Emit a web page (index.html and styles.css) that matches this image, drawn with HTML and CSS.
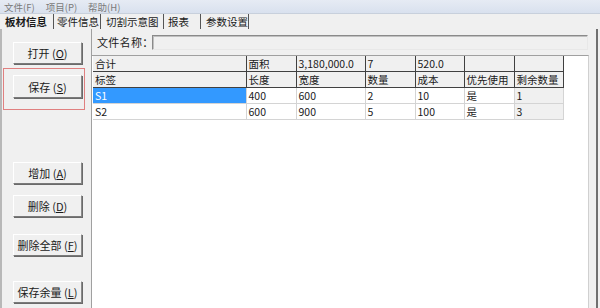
FILE: index.html
```html
<!DOCTYPE html>
<html lang="zh">
<head>
<meta charset="utf-8">
<link rel="stylesheet" href="styles.css">
</head>
<body>
<div class="app">
  <div class="menubar">
    <span>文件(F)</span><span>项目(P)</span><span>帮助(H)</span>
  </div>
  <div class="tabs">
    <span class="tab t1">板材信息</span>
    <span class="tab t2">零件信息</span>
    <span class="tab t3">切割示意图</span>
    <span class="tab t4">报表</span>
    <span class="tab t5">参数设置</span>
  </div>
  <div class="main">
    <div class="left">
      <button class="btn b-open">打开 (<u>O</u>)</button>
      <div class="redbox"><button class="btn">保存 (<u>S</u>)</button></div>
      <button class="btn b-add">增加 (<u>A</u>)</button>
      <button class="btn b-del">删除 (<u>D</u>)</button>
      <button class="btn b-delall">删除全部 (<u>F</u>)</button>
      <button class="btn b-saverest">保存余量 (<u>L</u>)</button>
    </div>
    <div class="right">
      <div class="filerow">
        <span class="flabel">文件名称：</span>
        <div class="finput"></div>
      </div>
      <div class="gridwrap">
        <table class="grid">
          <colgroup>
            <col class="c1"><col class="c2"><col class="c3"><col class="c4"><col class="c5"><col class="c6"><col class="c7">
          </colgroup>
          <tr class="hd">
            <td>合计</td><td>面积</td><td>3,180,000.0</td><td>7</td><td>520.0</td><td></td><td></td>
          </tr>
          <tr class="hd hd2">
            <td>标签</td><td>长度</td><td>宽度</td><td>数量</td><td>成本</td><td>优先使用</td><td>剩余数量</td>
          </tr>
          <tr class="dr">
            <td class="sel">S1</td><td>400</td><td>600</td><td>2</td><td>10</td><td>是</td><td class="ro">1</td>
          </tr>
          <tr class="dr">
            <td>S2</td><td>600</td><td>900</td><td>5</td><td>100</td><td>是</td><td class="ro">3</td>
          </tr>
        </table>
      </div>
    </div>
  </div>
</div>
</body>
</html>
```

FILE: styles.css
```css
html, body {
  margin: 0;
  padding: 0;
}
body {
  width: 600px;
  height: 308px;
  overflow: hidden;
  background: #f0f0f0;
  font-family: "Noto Sans CJK SC", "DejaVu Sans", sans-serif;
  font-size: 11px;
  color: #1a1a1a;
}
.app {
  display: flex;
  flex-direction: column;
  height: 308px;
}
.menubar {
  height: 13px;
  background: linear-gradient(#e6ebf4, #d9e1ee);
  border-bottom: 1px solid #c8d0dc;
  display: flex;
  align-items: flex-start;
  gap: 11px;
  padding-left: 4px;
  font-size: 9.5px;
  line-height: 14px;
  color: #7a7a7a;
  white-space: nowrap;
  flex: none;
}
.menubar span { height: 13px; }
.tabs {
  height: 15px;
  display: flex;
  align-items: center;
  padding-left: 3px;
  font-size: 10.5px;
  flex: none;
}
.tab {
  box-sizing: border-box;
  border-right: 1px solid #555;
  line-height: 15px;
  white-space: nowrap;
  overflow: hidden;
}
.t1 { width: 51px; padding-left: 2px; font-weight: 600; }
.t2 { width: 47px; padding-left: 3px; }
.t3 { width: 63px; padding-left: 5px; }
.t4 { width: 37px; padding-left: 4px; }
.t5 { width: 48px; padding-left: 5px; }
.main {
  flex: 1;
  display: flex;
}
.left {
  width: 91px;
  border-left: 2px solid #b8b8b8;
  box-sizing: border-box;
  display: flex;
  flex-direction: column;
  align-items: flex-start;
  padding-top: 13px;
}
.btn {
  box-sizing: border-box;
  width: 69px;
  height: 22px;
  margin-left: 11px;
  background: #f0f0f0;
  border: 1px solid;
  border-color: #ffffff #8a8a8a #7a7a7a #ffffff;
  box-shadow: 1px 1px 0 #6a6a6a;
  font-family: "Noto Sans CJK SC", sans-serif;
  font-size: 11px;
  color: #1a1a1a;
  padding: 0;
  display: flex;
  align-items: center;
  justify-content: center;
  white-space: pre;
  flex: none;
}
.btn u { text-underline-offset: 1px; }
.redbox {
  margin-top: 4px;
  margin-left: 1px;
  width: 82px;
  height: 42px;
  box-sizing: border-box;
  border: 1px solid #e08080;
  padding-top: 6px;
  flex: none;
}
.redbox .btn { margin-left: 9px; height: 23px; }
.b-add { margin-top: 52px; }
.b-del { margin-top: 11px; }
.b-delall { margin-top: 17px; }
.b-saverest { margin-top: 25px; }
.right {
  flex: 1;
  border-left: 1px solid #a0a0a0;
  border-right: 2px solid #707070;
  margin-right: 2px;
  display: flex;
  flex-direction: column;
}
.filerow {
  display: flex;
  align-items: center;
  height: 26px;
  padding-left: 5px;
}
.flabel {
  font-size: 11px;
  width: 55px;
  white-space: nowrap;
  letter-spacing: 0.3px;
  flex: none;
}
.finput {
  width: 434px;
  height: 13px;
  border: 1px solid;
  border-color: #8a8a8a #e8e8e8 #e8e8e8 #8a8a8a;
  box-shadow: inset 1px 1px 0 #c0c0c0;
}
.gridwrap {
  flex: 1;
  margin-right: 7px;
  background: #ffffff;
  border-top: 1px solid #a0a0a0;
  border-right: 1px solid #d0d0d0;
  padding-left: 1px;
}
.grid {
  border-collapse: collapse;
  table-layout: fixed;
  font-size: 10.5px;
}
.c1 { width: 153px; }
.c2 { width: 50px; }
.c3 { width: 69px; }
.c4 { width: 50px; }
.c5 { width: 49px; }
.c6 { width: 50px; }
.c7 { width: 49px; }
.grid td {
  height: 15px;
  padding: 0 2px;
  line-height: 15px;
  white-space: nowrap;
  overflow: hidden;
}
.hd td {
  background: #f0f0f0;
  border-right: 1px solid #404040;
  border-bottom: 1px solid #404040;
}
.dr td {
  border-right: 1px solid #d4d4d4;
  border-bottom: 1px solid #d4d4d4;
  height: 15px;
}
.dr td.sel {
  background: #3399ff;
  color: #ffffff;
}
.dr td.ro { background: #f0f0f0; }
```
